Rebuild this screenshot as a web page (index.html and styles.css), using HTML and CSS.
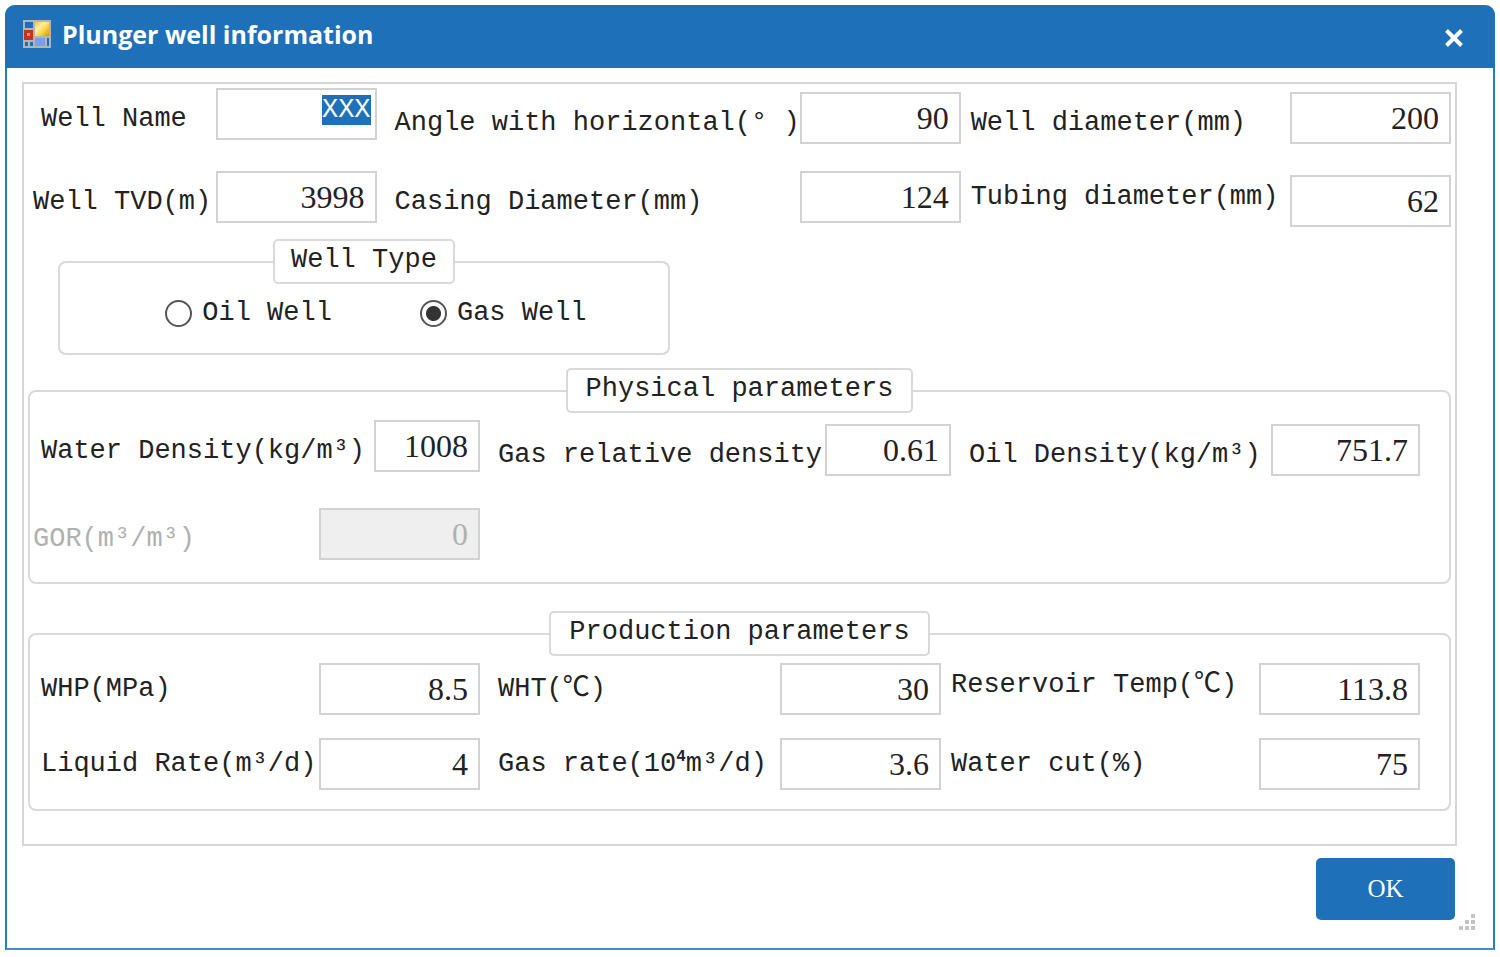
FILE: index.html
```html
<!DOCTYPE html>
<html lang="en">
<head>
  <meta charset="UTF-8">
  <title>Plunger well information</title>
  <link rel="stylesheet" href="styles.css">
</head>
<body>

  <form class="window">
    <header class="titlebar">
      <svg class="app-icon" viewBox="0 0 28 28" aria-hidden="true">
        <defs>
          <linearGradient id="gold" x1="0" y1="0" x2="1" y2="1">
            <stop offset="0" stop-color="#f3c53a"/>
            <stop offset="0.35" stop-color="#fff0a0"/>
            <stop offset="0.65" stop-color="#f9cf3c"/>
            <stop offset="1" stop-color="#d09212"/>
          </linearGradient>
        </defs>
        <rect width="28" height="28" fill="#b3b5b0"/>
        <rect x="2" y="2" width="8" height="6" fill="#1c6fb8"/>
        <rect x="12" y="2" width="14" height="14" fill="url(#gold)"/>
        <rect x="1" y="10" width="9" height="10" fill="#c8321f"/>
        <rect x="4" y="13" width="3" height="3" fill="#f08a70"/>
        <rect x="2" y="22" width="3" height="4" fill="#1c6fb8"/>
        <rect x="7" y="22" width="3" height="4" fill="#1c6fb8"/>
        <rect x="12" y="18" width="10" height="8" fill="#7d9fe6"/>
        <rect x="24" y="18" width="2" height="8" fill="#1c6fb8"/>
      </svg>
      <h1>Plunger well information</h1>
      <button type="button" class="close" aria-label="Close">
        <svg viewBox="0 0 20 20"><path d="M2.5 2.5 17.5 17.5M17.5 2.5 2.5 17.5"/></svg>
      </button>
    </header>

    <main class="panel">
      <div class="fields well">
        <div class="field">
          <label for="wellName">Well Name</label>
          <input type="text" id="wellName" class="name" value="XXX">
        </div>
        <div class="field lower">
          <label for="angle">Angle with horizontal(° )</label>
          <input type="text" id="angle" value="90">
        </div>
        <div class="field lower">
          <label for="wellDiameter">Well diameter(mm)</label>
          <input type="text" id="wellDiameter" value="200">
        </div>
        <div class="field flush">
          <label for="tvd">Well TVD(m)</label>
          <input type="text" id="tvd" value="3998">
        </div>
        <div class="field">
          <label for="casing">Casing Diameter(mm)</label>
          <input type="text" id="casing" value="124">
        </div>
        <div class="field lower high">
          <label for="tubing">Tubing diameter(mm)</label>
          <input type="text" id="tubing" value="62">
        </div>
      </div>

      <fieldset class="group type">
        <legend>Well Type</legend>
        <div class="radios">
          <label><input type="radio" name="wellType" value="oil">Oil Well</label>
          <label><input type="radio" name="wellType" value="gas" checked>Gas Well</label>
        </div>
      </fieldset>

      <fieldset class="group">
        <legend>Physical parameters</legend>
        <div class="fields physical">
          <div class="field">
            <label for="waterDensity">Water Density(kg/m³)</label>
            <input type="text" id="waterDensity" class="short" value="1008">
          </div>
          <div class="field lower">
            <label for="gasDensity">Gas relative density</label>
            <input type="text" id="gasDensity" class="medium" value="0.61">
          </div>
          <div class="field lower">
            <label for="oilDensity">Oil Density(kg/m³)</label>
            <input type="text" id="oilDensity" class="long" value="751.7">
          </div>
          <div class="field flush disabled">
            <label for="gor">GOR(m³/m³)</label>
            <input type="text" id="gor" value="0" disabled>
          </div>
        </div>
      </fieldset>

      <fieldset class="group last">
        <legend>Production parameters</legend>
        <div class="fields production">
          <div class="field">
            <label for="whp">WHP(MPa)</label>
            <input type="text" id="whp" value="8.5">
          </div>
          <div class="field">
            <label for="wht">WHT(℃)</label>
            <input type="text" id="wht" value="30">
          </div>
          <div class="field high">
            <label for="reservoir">Reservoir Temp(℃)</label>
            <input type="text" id="reservoir" value="113.8">
          </div>
          <div class="field">
            <label for="liquid">Liquid Rate(m³/d)</label>
            <input type="text" id="liquid" value="4">
          </div>
          <div class="field">
            <label for="gasRate">Gas rate(10<sup>4</sup>m³/d)</label>
            <input type="text" id="gasRate" value="3.6">
          </div>
          <div class="field">
            <label for="waterCut">Water cut(%)</label>
            <input type="text" id="waterCut" value="75">
          </div>
        </div>
      </fieldset>
    </main>

    <footer class="actions">
      <button type="submit" class="ok">OK</button>
      <svg class="grip" viewBox="0 0 16 16" aria-hidden="true">
        <path d="M12 0h4v4h-4zM6 6h4v4H6zM12 6h4v4h-4zM0 12h4v4H0zM6 12h4v4H6zM12 12h4v4h-4z"/>
      </svg>
    </footer>
  </form>

  <script>
    const wellName = document.getElementById('wellName');
    wellName.focus();
    wellName.select();
  </script>

</body>
</html>
```
FILE: styles.css
```css
* {
  box-sizing: border-box;
}

body {
  margin: 0;
  padding: 5px;
  background-color: #fff;
  color: #222;
  font-family: "Liberation Mono", "Noto Sans CJK SC", monospace;
  font-size: 27px;
  line-height: 32px;
}

input, button, legend {
  font: inherit;
  color: inherit;
}

.window {
  border: 2px solid #3f8fd0;
  border-top: none;
  border-left-color: #2a7cc2;
  border-right-color: #2a7cc2;
  border-radius: 10px 10px 0 0;
}

.titlebar {
  display: flex;
  align-items: center;
  gap: 11px;
  height: 63px;
  margin: 0 -2px;
  padding: 0 31px 6px 18px;
  background-color: #1e70b8;
  border-radius: 10px 10px 0 0;
  color: #fff;
}

.app-icon {
  width: 28px;
  height: 28px;
}

.titlebar h1 {
  flex: 1;
  margin: 0;
  font-family: "Open Sans", sans-serif;
  font-size: 25px;
  font-weight: bold;
}

.close {
  width: 20px;
  height: 20px;
  margin-top: 8px;
  padding: 0;
  border: none;
  background: none;
}

.close svg {
  display: block;
  fill: none;
  stroke: #fff;
  stroke-width: 4;
}

.panel {
  margin: 14px 36px 0 15px;
  padding: 4px 4px 33px;
  border: 2px solid #d6d6d6;
}

.fields {
  display: grid;
  align-items: start;
}

.well {
  grid-template-columns: 344fr 582fr 491fr;
  row-gap: 27px;
  padding-left: 5px;
}

.physical {
  grid-template-columns: 447fr 471fr 469fr;
  row-gap: 32px;
}

.production {
  grid-template-columns: 447fr 461fr 479fr;
  row-gap: 23px;
}

.physical, .production {
  padding-right: 26px;
}

.field {
  display: flex;
  justify-content: space-between;
  align-items: center;
  padding-left: 18px;
  white-space: nowrap;
}

.field:nth-child(3n+1) {
  padding-left: 8px;
}

.well .field:nth-child(3n), .production .field:nth-child(3n) {
  padding-left: 10px;
}

.field.flush {
  padding-left: 0;
}

.lower {
  margin-top: 4px;
}

.well label, .physical label {
  padding-top: 10px;
}

.high label {
  padding-top: 0;
  padding-bottom: 8px;
}

.field input {
  width: 161px;
  height: 52px;
  padding: 0 10px;
  border: 2px solid #d2d2d2;
  background-color: #fff;
  font-family: "Liberation Serif", serif;
  font-size: 32px;
  text-align: right;
  outline: none;
}

.field input.name {
  padding: 0 4px 8px;
  font-family: "Liberation Mono", monospace;
  font-size: 27px;
}

.name::selection {
  background-color: #1e70b8;
  color: #fff;
}

.field .short {
  width: 106px;
}

.field .medium {
  width: 126px;
}

.field .long {
  width: 149px;
}

.disabled {
  color: #b0b0b0;
}

.field input:disabled {
  background-color: #efefef;
}

sup {
  font-size: 16px;
  font-weight: bold;
  line-height: 0;
}

.group {
  min-width: 0;
  margin: 27px 0 0;
  padding: 7px 3px 22px;
  border: 2px solid #d9d9d9;
  border-radius: 8px;
}

.group legend {
  height: 45px;
  margin: 0 auto;
  padding: 3px 18px;
  border: 2px solid #d9d9d9;
  border-radius: 5px;
}

.type {
  width: 43%;
  margin: 12px 0 13px 30px;
}

.type legend {
  padding: 3px 16px;
}

.type + .group {
  margin-top: 0;
}

.last {
  padding-bottom: 19px;
}

.radios {
  display: flex;
  justify-content: center;
  gap: 88px;
  padding: 6px 0 2px 24px;
}

.radios label {
  display: flex;
  align-items: center;
  gap: 10px;
}

.radios input {
  appearance: none;
  width: 27px;
  height: 27px;
  margin: 0;
  border: 2px solid #555;
  border-radius: 50%;
}

.radios input:checked {
  background: radial-gradient(circle, #333 7px, #fff 8px);
}

.actions {
  display: flex;
  justify-content: flex-end;
  align-items: flex-end;
  gap: 4px;
  padding: 12px 18px 18px;
}

.ok {
  width: 139px;
  height: 62px;
  margin-bottom: 10px;
  border: none;
  border-radius: 5px;
  background-color: #1e70b8;
  color: #fff;
  font-family: "Liberation Serif", serif;
  font-size: 25px;
}

.grip {
  width: 16px;
  height: 16px;
  fill: #c4c4c4;
}
```
